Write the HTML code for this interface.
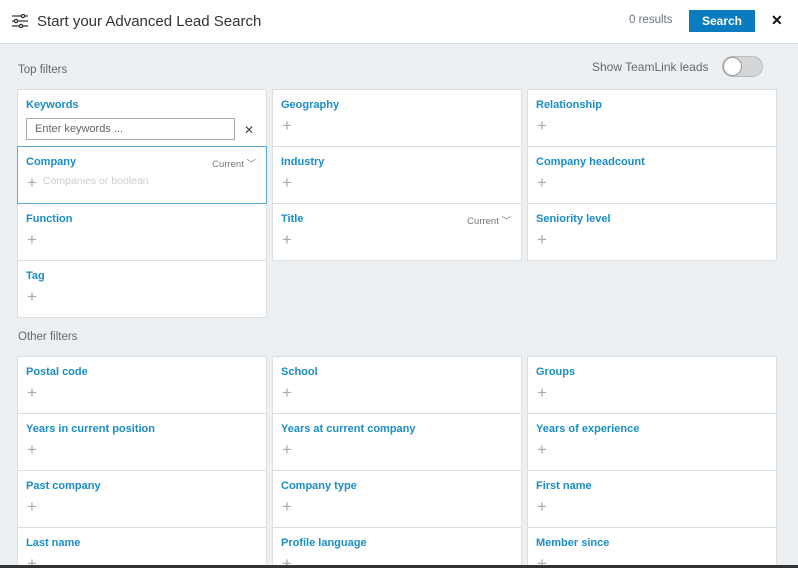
<!DOCTYPE html>
<html><head><meta charset="utf-8"><style>
*{box-sizing:border-box;margin:0;padding:0}
html,body{width:798px;height:568px;overflow:hidden}
body{background:#edf0f3;font-family:"Liberation Sans",sans-serif;position:relative}
.hdr{position:absolute;left:0;top:0;width:798px;height:44px;background:#fff;border-bottom:1px solid #d9dcdf}
.title{position:absolute;left:37px;top:13px;font-size:15px;color:#333}
.res{position:absolute;left:629px;top:14px;font-size:11.5px;color:#6a7580}
.btn{position:absolute;left:689px;top:10px;width:66px;height:22px;background:#0a7bbf;color:#fff;font-weight:bold;font-size:12px;text-align:center;line-height:22px}
.x{position:absolute;left:771px;top:12px;font-size:14px;font-weight:bold;color:#111}
.sec{position:absolute;left:18px;font-size:11.5px;color:#666}
.tog{position:absolute;left:592px;top:60px;font-size:12px;color:#666}
.sw{position:absolute;left:722px;top:56px;width:41px;height:21px;border-radius:11px;background:#d4d6d8;border:1px solid #bbb}
.sw i{position:absolute;left:0;top:0;width:19px;height:19px;border-radius:50%;background:#fff;border:1px solid #999}
.card{position:absolute;width:250px;height:58px;background:#fff;border:1px solid #dcdfe2}
.card b{position:absolute;left:8px;top:9px;font-size:11px;color:#1a8dc4}
.card .p{position:absolute;left:9px;top:26px;font-size:17px;color:#aaa;font-weight:normal}
.cur{position:absolute;right:10px;top:9px;font-size:9.5px;color:#777}
.inp{position:absolute;left:8px;top:28px;width:209px;height:22px;border:1px solid #aaa;font-size:11px;color:#666;padding:4px 8px}
.sel{border:1px solid #5aaad8;z-index:2}
.bot{position:absolute;left:0;top:565px;width:798px;height:3px;background:#333}
</style></head><body>
<div class="hdr">
<svg style="position:absolute;left:12px;top:14px" width="16" height="14" viewBox="0 0 16 14" fill="none" stroke="#333" stroke-width="1.3"><path d="M0 2h16M0 7h16M0 12h16"/><circle cx="11" cy="2" r="1.6" fill="#fff"/><circle cx="4" cy="7" r="1.6" fill="#fff"/><circle cx="9" cy="12" r="1.6" fill="#fff"/></svg>
<div class="title">Start your Advanced Lead Search</div>
<div class="res">0 results</div>
<div class="btn">Search</div>
<div class="x">✕</div>
</div>
<div class="sec" style="top:64px">Top filters</div>
<div class="tog">Show TeamLink leads</div>
<div class="sw"><i></i></div>

<div class="card" style="left:17px;top:89px"><b>Keywords</b><div class="inp">Enter keywords ...</div><span style="position:absolute;left:226px;top:33px;font-size:12px;color:#444">✕</span></div>
<div class="card" style="left:272px;top:89px"><b>Geography</b><span class="p">+</span></div>
<div class="card" style="left:527px;top:89px"><b>Relationship</b><span class="p">+</span></div>
<div class="card sel" style="left:17px;top:146px"><b>Company</b><span class="cur">Current ﹀</span><span class="p">+</span><span style="position:absolute;left:25px;top:28px;font-size:10.5px;color:#ccc">Companies or boolean</span></div>
<div class="card" style="left:272px;top:146px"><b>Industry</b><span class="p">+</span></div>
<div class="card" style="left:527px;top:146px"><b>Company headcount</b><span class="p">+</span></div>
<div class="card" style="left:17px;top:203px"><b>Function</b><span class="p">+</span></div>
<div class="card" style="left:272px;top:203px"><b>Title</b><span class="cur">Current ﹀</span><span class="p">+</span></div>
<div class="card" style="left:527px;top:203px"><b>Seniority level</b><span class="p">+</span></div>
<div class="card" style="left:17px;top:260px"><b>Tag</b><span class="p">+</span></div>

<div class="sec" style="top:331px">Other filters</div>
<div class="card" style="left:17px;top:356px"><b>Postal code</b><span class="p">+</span></div>
<div class="card" style="left:272px;top:356px"><b>School</b><span class="p">+</span></div>
<div class="card" style="left:527px;top:356px"><b>Groups</b><span class="p">+</span></div>
<div class="card" style="left:17px;top:413px"><b>Years in current position</b><span class="p">+</span></div>
<div class="card" style="left:272px;top:413px"><b>Years at current company</b><span class="p">+</span></div>
<div class="card" style="left:527px;top:413px"><b>Years of experience</b><span class="p">+</span></div>
<div class="card" style="left:17px;top:470px"><b>Past company</b><span class="p">+</span></div>
<div class="card" style="left:272px;top:470px"><b>Company type</b><span class="p">+</span></div>
<div class="card" style="left:527px;top:470px"><b>First name</b><span class="p">+</span></div>
<div class="card" style="left:17px;top:527px"><b>Last name</b><span class="p">+</span></div>
<div class="card" style="left:272px;top:527px"><b>Profile language</b><span class="p">+</span></div>
<div class="card" style="left:527px;top:527px"><b>Member since</b><span class="p">+</span></div>
<div class="bot"></div>
</body></html>
